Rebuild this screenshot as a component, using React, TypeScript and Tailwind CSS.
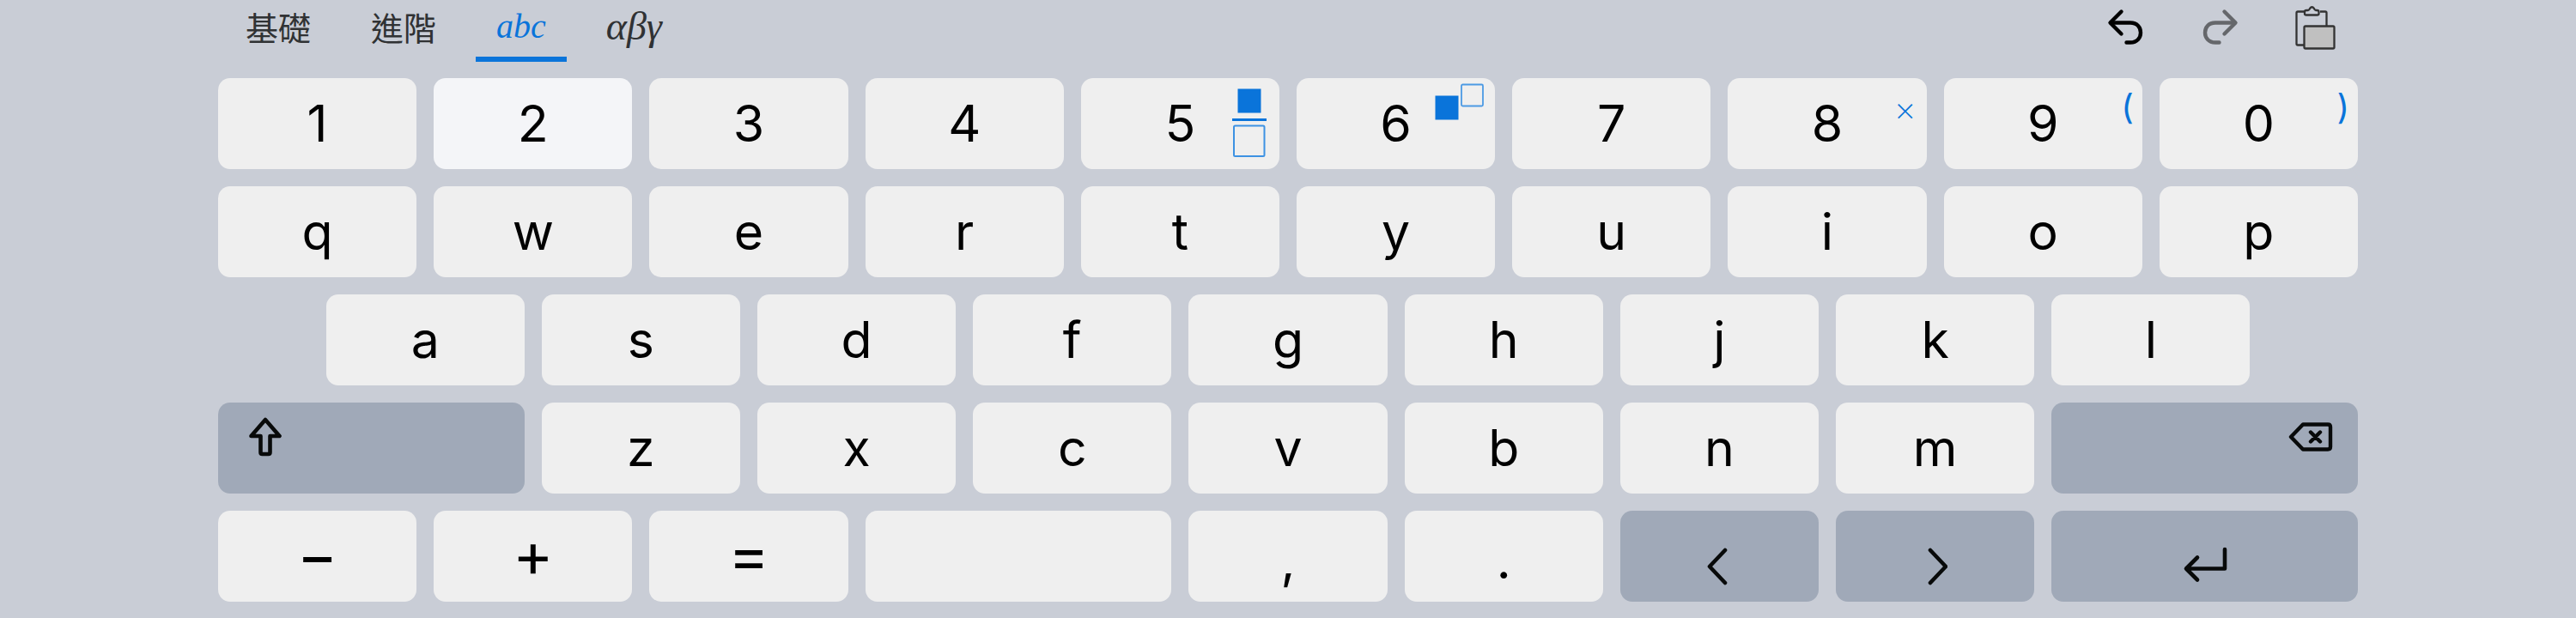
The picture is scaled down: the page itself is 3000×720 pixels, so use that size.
import React, { useState } from 'react';
import clsx from 'clsx';

interface KeyDef {
  label: string;
  text?: string;
  icon?: React.ReactNode;
  hint?: React.ReactNode;
  span?: string;
  dark?: boolean;
  active?: boolean;
  style?: string;
}

const UndoIcon = () => (
  <svg viewBox="0 0 48 48" className="h-12 w-12" fill="none" stroke="currentColor" strokeWidth="4.4" strokeLinecap="round" strokeLinejoin="round">
    <path d="M18.500 7.500 5.500 20.500 18.500 33.500" />
    <path d="M6.5 20.5H29C37 20.5 41 26 41 32S37 43.5 29 43.5H24.5" />
  </svg>
);

const RedoIcon = () => (
  <svg viewBox="0 0 48 48" className="h-12 w-12" fill="none" stroke="currentColor" strokeWidth="4.4" strokeLinecap="round" strokeLinejoin="round">
    <path d="M28.5 7.5 41.5 20.5 28.5 33.5" />
    <path d="M40.5 20.5H18C10 20.5 6 26 6 32S10 43.5 18 43.5H22.5" />
  </svg>
);

const PasteIcon = () => (
  <svg viewBox="0 0 48 52" className="h-[52px] w-12" fill="none" stroke="#333333" strokeWidth="2.3" strokeLinejoin="round">
    <path d="M12 7.5H4Q2.5 7.5 2.5 9V45Q2.5 46.5 4 46.5H11M30 7.5H36Q37.5 7.5 37.5 9V24" />
    <path d="M14 11.5Q12 11.5 12 10V8Q12 6 14 6H16Q17.5 5.5 18 4Q20.5 0.5 23 4Q23.5 5.5 25 6H26.5Q28.5 6 28.5 8V10Q28.5 11.5 26.5 11.5Z" />
    <rect x="11.5" y="24.5" width="35" height="26" rx="1.5" fill="#c0c0c0" />
  </svg>
);

const ShiftIcon = () => (
  <svg viewBox="0 0 40 48" className="h-12 w-10" fill="none" stroke="#080a0a" strokeWidth="4.6" strokeLinecap="round" strokeLinejoin="round">
    <path d="M20 4 36.5 23H25.5V42Q25.5 44 23.5 44H16.5Q14.5 44 14.5 42V23H3.5Z" />
  </svg>
);

const BackspaceIcon = () => (
  <svg viewBox="0 0 52 36" className="h-9 w-[52px]" fill="none" stroke="#080a0a" strokeWidth="4.4" strokeLinecap="round" strokeLinejoin="round">
    <path d="M3 18 17 3.5H46Q49 3.5 49 6.5V29.5Q49 32.5 46 32.5H17Z" />
    <path d="M26 12.5 37 23.5M37 12.5 26 23.5" />
  </svg>
);

const LeftIcon = () => (
  <svg viewBox="0 0 28 48" className="h-12 w-7" fill="none" stroke="#080a0a" strokeWidth="4.6" strokeLinecap="round" strokeLinejoin="round">
    <path d="M21 5 3 24 21 43" />
  </svg>
);

const RightIcon = () => (
  <svg viewBox="0 0 28 48" className="h-12 w-7" fill="none" stroke="#080a0a" strokeWidth="4.6" strokeLinecap="round" strokeLinejoin="round">
    <path d="M8 5 26 24 8 43" />
  </svg>
);

const EnterIcon = () => (
  <svg viewBox="0 0 52 42" className="h-[42px] w-[52px]" fill="none" stroke="#080a0a" strokeWidth="4.6" strokeLinecap="round" strokeLinejoin="round">
    <path d="M49 3V25.5H4M17 12.5 4 25.5 17 38.5" />
  </svg>
);

const FractionIcon = () => (
  <svg viewBox="0 0 40 80" className="h-20 w-10" fill="none">
    <rect x="6.5" y="0.5" width="27" height="28" fill="#0a74da" />
    <path d="M0 36.5H40" stroke="#0a74da" strokeWidth="2.8" />
    <rect x="2" y="43.5" width="35.5" height="35.5" rx="1.5" stroke="#3d92e3" strokeWidth="2" />
  </svg>
);

const PowerIcon = () => (
  <svg viewBox="0 0 58 46" className="h-[46px] w-[58px]" fill="none">
    <rect x="0.5" y="16.5" width="27" height="28" fill="#0a74da" />
    <rect x="31" y="3.5" width="25" height="25" rx="1.5" stroke="#4c9ae4" strokeWidth="1.8" />
  </svg>
);

const letters = (text: string): KeyDef[] => text.split('').map((char) => ({ label: char, text: char }));

const operatorStyle = 'items-center justify-center pb-1 text-[72px]';
const punctuationStyle = 'items-center justify-center pt-2 text-[59px]';

const rows: KeyDef[][] = [
  [
    { label: '1', text: '1' },
    { label: '2', text: '2', active: true },
    { label: '3', text: '3' },
    { label: '4', text: '4' },
    { label: '5', text: '5', hint: <span className="absolute top-3 right-[15px]"><FractionIcon /></span> },
    { label: '6', text: '6', hint: <span className="absolute top-1 right-3"><PowerIcon /></span> },
    { label: '7', text: '7' },
    { label: '8', text: '8', hint: <span className="absolute top-3 right-3 text-[40px] leading-[48px] font-extralight">×</span> },
    { label: '9', text: '9', hint: <span className="absolute top-[10px] right-[10px] text-[40px] leading-[48px]">(</span> },
    { label: '0', text: '0', hint: <span className="absolute top-[10px] right-[10px] text-[40px] leading-[48px]">)</span> }
  ],
  letters('qwertyuiop'),
  letters('asdfghjkl'),
  [
    { label: 'Shift', icon: <ShiftIcon />, span: 'col-span-3', dark: true, style: 'items-start justify-start px-[35px] pt-4' },
    ...letters('zxcvbnm'),
    { label: 'Backspace', icon: <BackspaceIcon />, span: 'col-span-3', dark: true, style: 'items-start justify-end px-[29px] pt-[22px]' }
  ],
  [
    { label: 'Minus', text: '−', style: operatorStyle },
    { label: 'Plus', text: '+', style: operatorStyle },
    { label: 'Equals', text: '=', style: operatorStyle },
    { label: 'Space', span: 'col-span-3' },
    { label: 'Comma', text: ',', style: punctuationStyle },
    { label: 'Period', text: '.', style: punctuationStyle },
    { label: 'Move left', icon: <LeftIcon />, dark: true, style: 'items-center justify-center pt-6' },
    { label: 'Move right', icon: <RightIcon />, dark: true, style: 'items-center justify-center pt-6' },
    { label: 'Enter', icon: <EnterIcon />, span: 'col-span-3', dark: true, style: 'items-center justify-center pt-5' }
  ]
];

const tabs = [
  { id: 'basic', label: '基礎', style: 'text-[38px]' },
  { id: 'advanced', label: '進階', style: 'text-[38px]' },
  { id: 'abc', label: 'abc', style: 'font-["Liberation_Serif",serif] text-[40px] italic pb-1' },
  { id: 'greek', label: 'αβγ', style: 'font-["Liberation_Serif",serif] text-[46px] italic pb-1' }
];

const Key: React.FC<{ item: KeyDef }> = ({ item }) => (
  <button
    type="button"
    aria-label={item.label}
    className={clsx(
      'relative flex h-[106px] rounded-[14px] leading-none text-black',
      item.span ?? 'col-span-2',
      item.style ?? 'items-center justify-center pb-[2px] text-[59px]',
      item.dark ? 'bg-[#a0a9b8]' : item.active ? 'bg-[#f4f5f8]' : 'bg-[#efefef]'
    )}
  >
    {item.text}
    {item.icon}
    {item.hint && <span className="text-[#0a74da]">{item.hint}</span>}
  </button>
);

const App: React.FC = () => {
  const [activeTab, setActiveTab] = useState('abc');

  return (
    <main className="min-h-screen bg-[#c9cdd6] font-['Inter','Noto_Sans_CJK_TC',sans-serif]">
      <div className="mx-auto w-full max-w-[2492px]">
        {/* Toolbar */}
        <div className="flex h-[72px] justify-between pr-[26px] pl-2">
          <div className="flex gap-[22px]" role="tablist">
            {tabs.map((tab) => (
              <button
                key={tab.id}
                type="button"
                role="tab"
                aria-selected={activeTab === tab.id}
                onClick={() => setActiveTab(tab.id)}
                className={clsx(
                  'flex items-center border-b-[6px] px-6 leading-none',
                  tab.style,
                  activeTab === tab.id ? 'border-[#0a74da] text-[#0a74da]' : 'border-transparent text-[#303234]'
                )}
              >
                {tab.label}
              </button>
            ))}
          </div>
          <div className="flex items-start gap-[62px] pt-[6px]">
            <button type="button" aria-label="Undo" className="text-black">
              <UndoIcon />
            </button>
            <button type="button" aria-label="Redo" className="text-[#65676b]">
              <RedoIcon />
            </button>
            <button type="button" aria-label="Paste">
              <PasteIcon />
            </button>
          </div>
        </div>

        {/* Keys */}
        <div className="flex flex-col gap-5 pt-[19px] pb-[19px]">
          {rows.map((row, index) => (
            <div key={index} className="grid grid-cols-20 gap-5">
              {/* The home row is shifted in by half a key */}
              {index === 2 && <div />}
              {row.map((item) => (
                <Key key={item.label} item={item} />
              ))}
            </div>
          ))}
        </div>
      </div>
    </main>
  );
};

export default App;
